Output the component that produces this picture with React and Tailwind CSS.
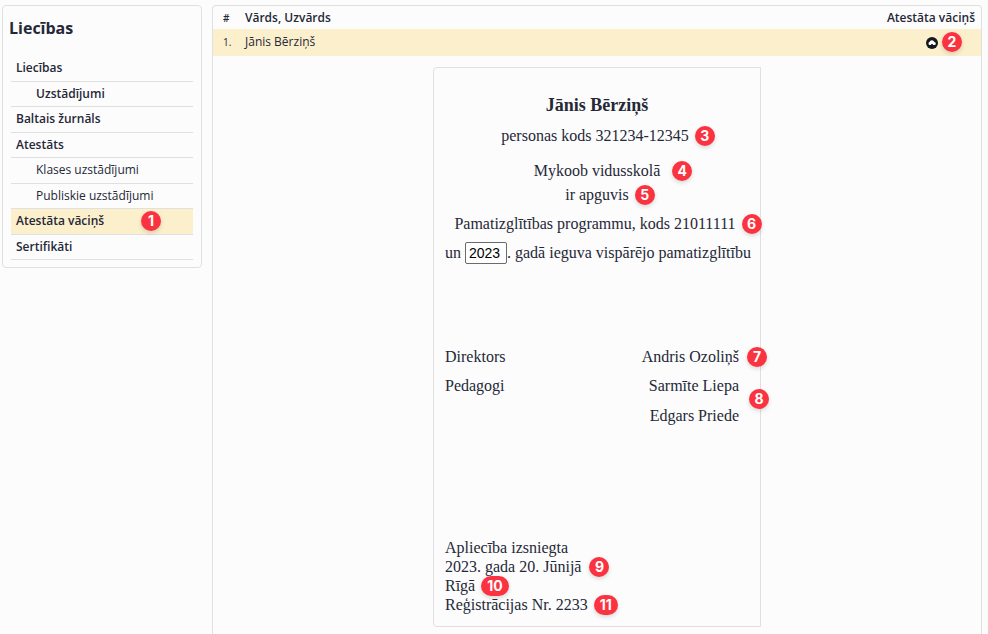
import React from "react";

const menu = [
  { label: "Liecības", bold: true },
  { label: "Uzstādījumi", bold: true, nested: true },
  { label: "Baltais žurnāls", bold: true },
  { label: "Atestāts", bold: true },
  { label: "Klases uzstādījumi", nested: true },
  { label: "Publiskie uzstādījumi", nested: true },
  { label: "Atestāta vāciņš", bold: true, active: true, mark: "1" },
  { label: "Sertifikāti", bold: true },
];

function Badge({ n, className }) {
  return (
    <span
      className={`absolute flex h-5 min-w-5 items-center justify-center rounded-full bg-[#fb3340] font-['Inter','Liberation_Sans',sans-serif] text-sm leading-5 font-bold text-white shadow-[0_2px_4px_rgba(0,0,0,0.15)] ${n.length > 1 ? "px-1.5" : ""} ${className}`}
    >
      {n}
    </span>
  );
}

function Sidebar() {
  return (
    <aside className="w-[200px] shrink-0 rounded border border-[#e0e0e0] px-2 pb-[7px]">
      <h1 className="-ml-0.5 h-[50px] pt-2.5 text-base leading-6 font-bold">Liecības</h1>
      <ul className="grid h-[204px] grid-rows-8">
        {menu.map((m) => (
          <li
            key={m.label}
            className={`relative flex items-center border-b border-[#e0e0e0] ${m.active ? "bg-[#fcefcc]" : ""} ${m.nested ? "pl-[25px]" : "pl-[5px]"}`}
          >
            <a href="#" className={m.bold ? "font-semibold" : ""}>
              {m.label}
            </a>
            {m.mark && <Badge n={m.mark} className="left-[130px]" />}
          </li>
        ))}
      </ul>
    </aside>
  );
}

function Certificate() {
  return (
    <article className="mx-auto mt-[11px] mb-3 w-[328px] rounded-l border border-[#e0e0e0] px-[11px] pt-[25px] pb-3 font-['Liberation_Serif','Times_New_Roman',serif] text-base leading-5">
      <div className="flex flex-col items-center whitespace-nowrap">
        <h2 className="text-lg leading-6 font-bold">Jānis Bērziņš</h2>
        <p className="relative mt-[9px]">
          personas kods 321234-12345&nbsp;
          <Badge n="3" className="top-0 left-full ml-0.5" />
        </p>
        <p className="relative mt-[15px]">
          Mykoob vidusskolā
          <Badge n="4" className="top-0 left-full ml-3" />
        </p>
        <p className="relative mt-1">
          ir apguvis
          <Badge n="5" className="top-0 left-full ml-1.5" />
        </p>
        <p className="relative mt-[9px]">
          Pamatizglītības programmu, kods 21011111&nbsp;
          <Badge n="6" className="top-0 left-full ml-0.5" />
        </p>
        <p className="mt-2 flex items-center self-start">
          <label htmlFor="year">un</label>
          <input
            id="year"
            defaultValue="2023"
            className="ml-1 h-[22px] w-[42px] rounded-xs border border-[#6b6b6b] bg-white px-[3px] font-['Liberation_Sans',Arial,sans-serif] text-sm text-black"
          />
          . gadā ieguva vispārējo pamatizglītību
        </p>
      </div>
      <dl className="mt-[83px] flex flex-col gap-[9px] pr-2.5">
        <div className="flex justify-between">
          <dt>Direktors</dt>
          <dd className="relative">
            Andris Ozoliņš
            <Badge n="7" className="top-0 left-full ml-2" />
          </dd>
        </div>
        <div className="flex justify-between">
          <dt>Pedagogi</dt>
          <dd className="relative flex flex-col items-end gap-2.5">
            <span>Sarmīte Liepa</span>
            <span>Edgars Priede</span>
            <Badge n="8" className="top-[13px] left-full ml-2.5" />
          </dd>
        </div>
      </dl>
      <div className="mt-[112px] flex flex-col items-start leading-[19px]">
        <p>Apliecība izsniegta</p>
        <p className="relative">
          2023. gada 20. Jūnijā
          <Badge n="9" className="top-0 left-full ml-2" />
        </p>
        <p className="relative">
          Rīgā
          <Badge n="10" className="top-0 left-full ml-1.5" />
        </p>
        <p className="relative">
          Reģistrācijas Nr. 2233
          <Badge n="11" className="top-0 left-full ml-1.5" />
        </p>
      </div>
    </article>
  );
}

export default function App() {
  return (
    <div className="flex min-h-screen items-stretch gap-2.5 bg-[#fcfcfc] pt-[5px] pr-1.5 pl-0.5 font-['Open_Sans','Noto_Sans',sans-serif] text-xs text-[#252837]">
      <div className="shrink-0">
        <Sidebar />
      </div>
      <main className="min-w-0 flex-1 rounded-t border border-b-0 border-[#e0e0e0]">
        <table className="w-full border-collapse text-left leading-4">
          <thead>
            <tr className="h-[23px]">
              <th className="w-[32px] pl-2.5 text-[10px] font-semibold">#</th>
              <th className="font-semibold">Vārds, Uzvārds</th>
              <th className="pr-1.5 text-right font-semibold">Atestāta vāciņš</th>
            </tr>
          </thead>
          <tbody>
            <tr className="h-[27px] bg-[#fcefcc]">
              <td className="pb-0.5 pl-2.5 text-[10px]">1.</td>
              <td className="pb-0.5">Jānis Bērziņš</td>
              <td className="pb-0.5">
                <div className="relative flex h-5 items-center justify-end pr-[43px]">
                  <button aria-label="Lejupielādēt" className="mt-0.5 block size-3">
                    <svg viewBox="0 0 12 12" className="size-3">
                      <circle cx="6" cy="6" r="6" fill="#15181f" />
                      <path d="M3.8 8a1.5 1.5 0 0 1-.3-2.9A2.5 2.5 0 0 1 8.3 5 1.5 1.5 0 0 1 8.3 8H6.9V6.9H5.2V8Z" fill="#fff" />
                    </svg>
                  </button>
                  <Badge n="2" className="right-[19px]" />
                </div>
              </td>
            </tr>
          </tbody>
        </table>
        <Certificate />
      </main>
    </div>
  );
}
